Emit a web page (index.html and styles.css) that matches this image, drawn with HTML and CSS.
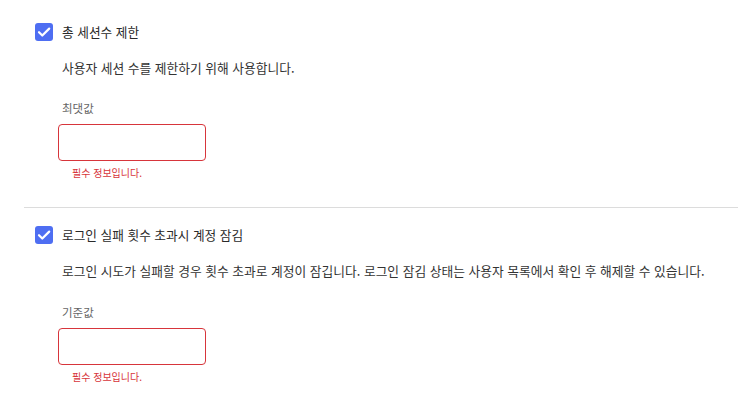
FILE: index.html
```html
<!DOCTYPE html>
<html lang="ko">
<head>
  <meta charset="UTF-8" />
  <title>보안 설정</title>
  <link rel="stylesheet" href="styles.css">
</head>
<body>
  <div class="settings">
    <section class="option">
      <label class="check-row">
        <span class="checkbox">
          <svg viewBox="0 0 18 18" width="18" height="18"><path d="M4 9.2l3.3 3.3L14.2 5.6" fill="none" stroke="#fff" stroke-width="2.2" stroke-linecap="round" stroke-linejoin="round"/></svg>
        </span>
        <span class="check-label">총 세션수 제한</span>
      </label>
      <div class="option-body">
        <p class="desc">사용자 세션 수를 제한하기 위해 사용합니다.</p>
        <div class="field">
          <div class="field-label">최댓값</div>
          <input class="field-input" type="text">
          <div class="field-error">필수 정보입니다.</div>
        </div>
      </div>
    </section>

    <hr class="divider">

    <section class="option second">
      <label class="check-row">
        <span class="checkbox">
          <svg viewBox="0 0 18 18" width="18" height="18"><path d="M4 9.2l3.3 3.3L14.2 5.6" fill="none" stroke="#fff" stroke-width="2.2" stroke-linecap="round" stroke-linejoin="round"/></svg>
        </span>
        <span class="check-label">로그인 실패 횟수 초과시 계정 잠김</span>
      </label>
      <div class="option-body">
        <p class="desc">로그인 시도가 실패할 경우 횟수 초과로 계정이 잠깁니다. 로그인 잠김 상태는 사용자 목록에서 확인 후 해제할 수 있습니다.</p>
        <div class="field">
          <div class="field-label">기준값</div>
          <input class="field-input" type="text">
          <div class="field-error">필수 정보입니다.</div>
        </div>
      </div>
    </section>
  </div>
</body>
</html>
```

FILE: styles.css
```css
body {
  margin: 0;
  font-family: "Noto Sans CJK KR", "Noto Sans", sans-serif;
  background-color: white;
  color: #222;
}

.settings {
  padding-top: 23px;
}

.option {
  padding: 0 0 27px 35px;
}

.option.second {
  padding-top: 18px;
}

.check-row {
  display: flex;
  align-items: center;
  gap: 9px;
  height: 18px;
}

.checkbox {
  width: 18px;
  height: 18px;
  border-radius: 3px;
  background-color: #4e6ef2;
  display: flex;
}

.check-label {
  font-size: 12.7px;
  line-height: 18px;
  color: #2a2a2a;
}

.option-body {
  padding-left: 27px;
}

.desc {
  margin: 18px 0 0;
  font-size: 12.75px;
  line-height: 18px;
  color: #333;
}

.field {
  margin-top: 22px;
}

.second .field {
  margin-top: 23px;
}

.field-label {
  font-size: 11.5px;
  line-height: 18px;
  color: #666;
}

.field-input {
  display: block;
  box-sizing: border-box;
  width: 148px;
  height: 37px;
  margin: 7px 0 0 -4px;
  border: 1px solid #d7353b;
  border-radius: 4px;
  outline: none;
  background: white;
}

.field-error {
  margin: 5px 0 0 10px;
  font-size: 10px;
  line-height: 14px;
  color: #d7353b;
}

.divider {
  margin: 0 0 0 24px;
  border: none;
  border-top: 1px solid #dcdcdc;
}
```
